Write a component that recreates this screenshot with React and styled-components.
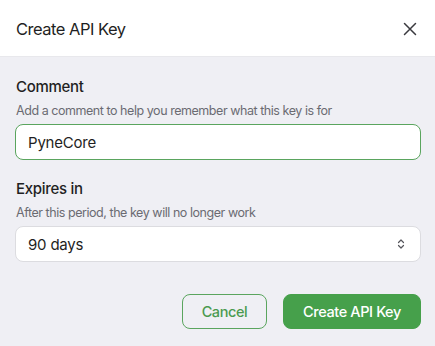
import React from "react";
import styled, { createGlobalStyle } from "styled-components";

const Global = createGlobalStyle`
  html, body { margin: 0; padding: 0; background: #efeff4; }
  body { font-family: Inter, "Noto Sans", "Liberation Sans", sans-serif; }
  * { box-sizing: border-box; }
`;

const Dialog = styled.div`
  width: 435px;
  height: 346px;
  display: flex;
  flex-direction: column;
  background: #efeff4;
`;

const Header = styled.div`
  height: 57px;
  background: #fff;
  border-bottom: 1px solid #e8e8ec;
  display: flex;
  align-items: center;
  justify-content: space-between;
  padding: 1px 16px 0 16px;
`;

const Title = styled.h2`
  margin: 0;
  font-size: 16.5px;
  font-weight: 400;
  color: #1f1f23;
  letter-spacing: -0.5px;
`;

const CloseButton = styled.button`
  border: 0;
  background: none;
  padding: 0;
  width: 18px;
  height: 18px;
  display: flex;
  align-items: center;
  justify-content: center;
  color: #3a3a3f;
  cursor: pointer;
`;

const Body = styled.div`
  padding: 20px 14px 0 15px;
  display: flex;
  flex-direction: column;
`;

const Field = styled.div`
  display: flex;
  flex-direction: column;
  margin-bottom: ${(p) => p.$mb || 0}px;
`;

const Label = styled.label`
  font-size: 15px;
  font-weight: 500;
  color: #1f1f23;
  line-height: 20px;
  margin-left: 1px;
  letter-spacing: -0.3px;
`;

const Helper = styled.div`
  font-size: 12.5px;
  color: #6b6b72;
  line-height: 16px;
  margin: 6px 0 5px 1px;
  letter-spacing: -0.45px;
`;

const Input = styled.input`
  height: 36px;
  width: 100%;
  border: 1px solid ${(p) => (p.$focused ? "#5aa55e" : "#dcdce0")};
  border-radius: 8px;
  background: #fff;
  padding: 0 12px;
  font-family: inherit;
  font-size: 15px;
  letter-spacing: -0.2px;
  color: #1f1f23;
  outline: none;
`;

const SelectBox = styled.div`
  height: 36px;
  width: 100%;
  border: 1px solid #dcdce0;
  border-radius: 8px;
  background: #fff;
  display: flex;
  align-items: center;
  justify-content: space-between;
  padding: 0 15px 0 12px;
  font-size: 15px;
  letter-spacing: -0.2px;
  color: #1f1f23;
`;

const Footer = styled.div`
  display: flex;
  justify-content: flex-end;
  gap: 16px;
  margin-top: 32px;
`;

const Button = styled.button`
  height: 35px;
  border-radius: 8px;
  font-family: inherit;
  font-size: 14.5px;
  font-weight: 500;
  letter-spacing: -0.4px;
  white-space: nowrap;
  padding: 0;
  cursor: pointer;
  border: 1px solid ${(p) => (p.$primary ? "#46a04b" : "#5aa55e")};
  background: ${(p) => (p.$primary ? "#46a04b" : "transparent")};
  color: ${(p) => (p.$primary ? "#fff" : "#4a9a4f")};
  width: ${(p) => p.$w}px;
`;

export default function App() {
  return (
    <>
      <Global />
      <Dialog>
        <Header>
          <Title>Create API Key</Title>
          <CloseButton aria-label="Close">
            <svg width="14" height="14" viewBox="0 0 14 14" fill="none" stroke="currentColor" strokeWidth="1.5" strokeLinecap="round">
              <path d="M1.5 1.5 L12.5 12.5 M12.5 1.5 L1.5 12.5" />
            </svg>
          </CloseButton>
        </Header>
        <Body>
          <Field $mb={19}>
            <Label>Comment</Label>
            <Helper>Add a comment to help you remember what this key is for</Helper>
            <Input $focused defaultValue="PyneCore" />
          </Field>
          <Field>
            <Label>Expires in</Label>
            <Helper>After this period, the key will no longer work</Helper>
            <SelectBox>
              <span>90 days</span>
              <svg width="8" height="12" viewBox="0 0 8 12" fill="none" stroke="#55555b" strokeWidth="1.2" strokeLinecap="round" strokeLinejoin="round">
                <path d="M1.5 4.5 L4 2 L6.5 4.5 M1.5 7.5 L4 10 L6.5 7.5" />
              </svg>
            </SelectBox>
          </Field>
          <Footer>
            <Button $w={85}>Cancel</Button>
            <Button $primary $w={138}>Create API Key</Button>
          </Footer>
        </Body>
      </Dialog>
    </>
  );
}
